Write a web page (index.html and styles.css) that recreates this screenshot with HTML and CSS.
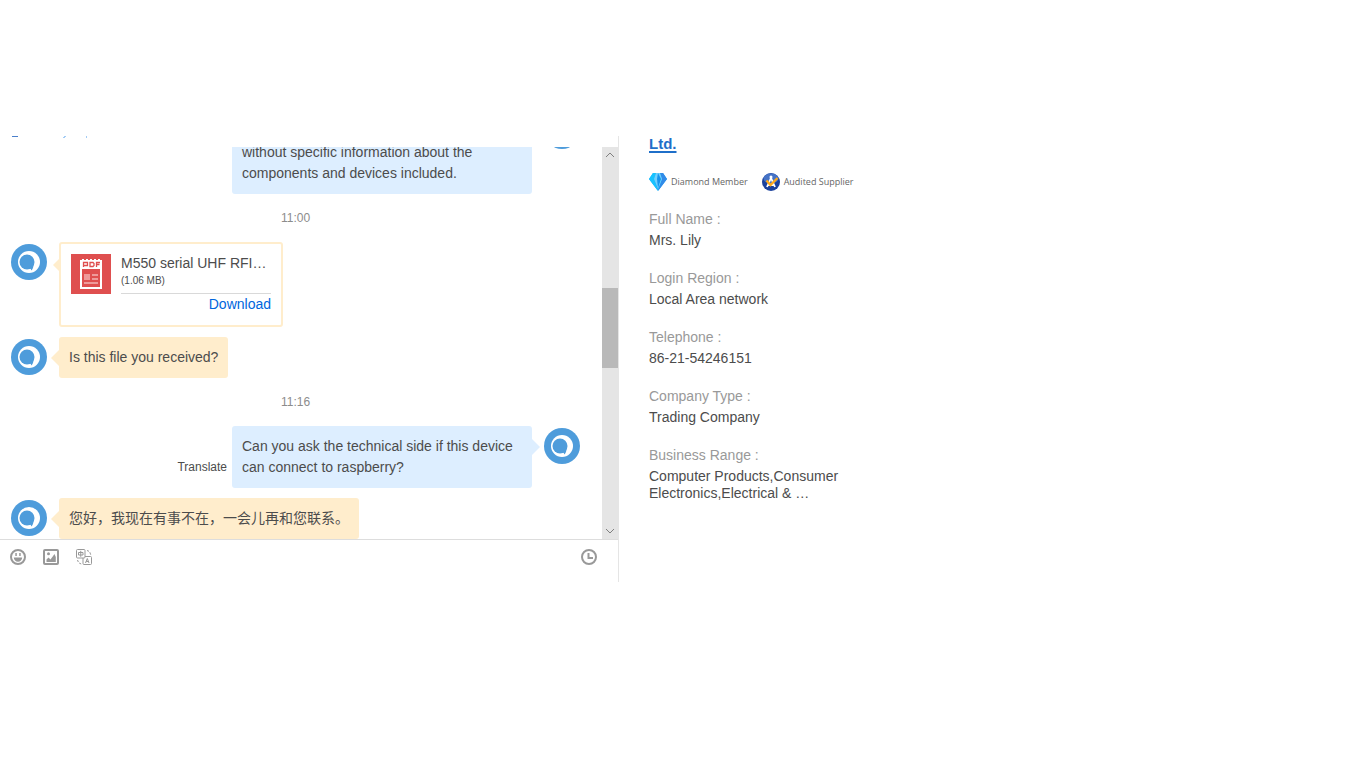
FILE: index.html
```html
<!DOCTYPE html>
<html lang="en">
<head>
<meta charset="utf-8">
<title>Chat</title>
<link rel="stylesheet" href="styles.css">
</head>
<body>
<svg class="defs" aria-hidden="true">
  <symbol id="avatar" viewBox="0 0 36 36">
    <circle cx="18" cy="18" r="18" fill="#4e9cdb"/>
    <circle cx="18" cy="18" r="11" fill="#fff"/>
    <circle cx="16" cy="18" r="7.500" fill="#4e9cdb"/>
    <path d="M16 24l6.500-3c0 2-.7 4.200-2 5.500-.3-1-.8-1.800-1.700-2.300z" fill="#4e9cdb"/>
  </symbol>
</svg>
<main class="app">
  <section class="chat">
    <header class="chat-header">
      <svg class="header-traces" width="100" height="3" viewBox="0 0 100 3" aria-hidden="true">
        <path d="M12 0h6v1h-6z" fill="#4a7fcb"/>
        <path d="M64 0h2v1h-1v1h-2v-1h1zM86 0h1v2h-1z" fill="#a3ccf5"/>
      </svg>
    </header>
    <div class="chat-body">
      <div class="messages">
        <div class="message sent">
          <svg class="avatar"><use href="#avatar"/></svg>
          <p class="bubble clipped">without specific information about the components and devices included.</p>
        </div>
        <time class="stamp">11:00</time>
        <div class="message">
          <svg class="avatar"><use href="#avatar"/></svg>
          <div class="bubble file">
            <svg class="file-icon" viewBox="0 0 40 40" aria-hidden="true">
              <path d="M0 0h40v40H0z" fill="#df4f4f"/>
              <path d="M9 6h2v-1h2v1h2v-1h2v1h2v-1h2v1h2v-1h2v1h2v-1h2v1h2v29H9z" fill="#fff"/>
              <path d="M11 15h18v18H11z" fill="#df4f4f"/>
              <path d="M12.500 13V8.500h4v3h-4M19 8.500v4h3l1-1v-2l-1-1zM25.500 13V8.500H29M25.500 10.500h3" fill="none" stroke="#df4f4f" stroke-width="1.300"/>
              <path d="M13 20h6v6h-6zM21 20h6v2h-6zM21 24h6v2h-6zM13 28h14v2H13z" fill="#ee9a9a"/>
            </svg>
            <div class="file-info">
              <span class="file-name">M550 serial UHF RFI…</span>
              <span class="file-size">(1.06 MB)</span>
              <a class="download" href="#download">Download</a>
            </div>
          </div>
        </div>
        <div class="message">
          <svg class="avatar"><use href="#avatar"/></svg>
          <p class="bubble">Is this file you received?</p>
        </div>
        <time class="stamp">11:16</time>
        <div class="message sent">
          <svg class="avatar"><use href="#avatar"/></svg>
          <p class="bubble">Can you ask the technical side if this device can connect to raspberry?</p>
          <button class="translate" type="button">Translate</button>
        </div>
        <div class="message">
          <svg class="avatar"><use href="#avatar"/></svg>
          <p class="bubble" lang="zh">您好，我现在有事不在，一会儿再和您联系。</p>
        </div>
      </div>
      <div class="scrollbar">
        <svg class="arrow" viewBox="0 0 16 16"><path d="M4 10l4-4 4 4"/></svg>
        <div class="track"><div class="thumb"></div></div>
        <svg class="arrow" viewBox="0 0 16 16"><path d="M4 6l4 4 4-4"/></svg>
      </div>
    </div>
    <footer class="toolbar">
      <button type="button" class="tool" aria-label="Emoji"><svg viewBox="0 0 16 16"><circle cx="8" cy="8" r="7" fill="none" stroke="#999" stroke-width="2"/><path d="M5.300 4h1.500v3H5.300zM9.200 4h1.500v3H9.200zM3.800 8.500h8.400a4.200 4.200 0 0 1-8.400 0z" fill="#999"/></svg></button>
      <button type="button" class="tool" aria-label="Picture"><svg viewBox="0 0 16 16"><rect x="1" y="1" width="14" height="14" rx="1" fill="none" stroke="#999" stroke-width="2"/><circle cx="5.500" cy="4.800" r="1.500" fill="#999"/><path d="M3.500 13V10.500L5.500 8.500l2 2L11.500 5l1.300 3v5z" fill="#999"/></svg></button>
      <button type="button" class="tool" aria-label="Translate text"><svg viewBox="0 0 16 16" fill="none" stroke="#999"><rect x=".5" y=".5" width="8.500" height="8.500" rx="1"/><path d="M2.500 3.500H7V6H2.500zM4.750 1.800v6M9 7.500h5.500q1 0 1 1v6q0 1-1 1H8q-1 0-1-1V9M9.500 14l1.800-4.500L13 14M10.200 12.500h2.300M11 1.500l2 .8M13.800 3.200l.9 2.500M1.500 11l.8 2M3.200 14l2 1"/></svg></button>
      <button type="button" class="tool history" aria-label="History"><svg viewBox="0 0 16 16" fill="none" stroke="#999" stroke-width="2"><circle cx="8" cy="8" r="7"/><path d="M7.500 4v5H12"/></svg></button>
    </footer>
  </section>
  <aside class="profile">
    <a class="company" href="#company">Ltd.</a>
    <div class="badges">
      <span class="badge"><svg viewBox="0 0 18 18" aria-hidden="true"><path d="M4 0h10l4 6-9 12L0 6z" fill="#1eaaf8"/><path d="M4 0h3L5 6l4 12L0 6z" fill="#16c3ff"/><path d="M11 0h3l4 6-9 12 4-12z" fill="#328be8"/><path d="M7 0h4l2 6-4 10L5 6z" fill="#70d0fc"/><path d="M9 0l3 6-3 9-1-9z" fill="#1594ee"/></svg>Diamond Member</span>
      <span class="badge"><svg viewBox="0 0 18 18" aria-hidden="true"><circle cx="9" cy="9" r="9" fill="#1c429d"/><ellipse cx="9" cy="5.500" rx="7.500" ry="5" fill="#4573c6"/><path d="M5 14L9 5l4 9M6.500 12h5" fill="none" stroke="#fff" stroke-width="1.800"/><circle cx="9" cy="4" r="1.500" fill="#fff"/><path d="M4.500 7.500l4 4.500L15.500 5" fill="none" stroke="#ffa91b" stroke-width="2.300"/></svg>Audited Supplier</span>
    </div>
    <dl class="details">
      <div><dt>Full Name :</dt><dd>Mrs. Lily</dd></div>
      <div><dt>Login Region :</dt><dd>Local Area network</dd></div>
      <div><dt>Telephone :</dt><dd>86-21-54246151</dd></div>
      <div><dt>Company Type :</dt><dd>Trading Company</dd></div>
      <div><dt>Business Range :</dt><dd>Computer Products,Consumer Electronics,Electrical &amp; …</dd></div>
    </dl>
  </aside>
</main>
</body>
</html>
```
FILE: styles.css
```css
* { box-sizing: border-box; }
body {
  margin: 0;
  background: #fff;
  color: #4c4c4c;
  font: 14px/21px "Liberation Sans", Arial, "Noto Sans CJK SC", sans-serif;
}
p, dl, dd { margin: 0; }
button { border: 0; padding: 0; background: none; font: inherit; color: inherit; }
svg { display: block; flex: none; }
.defs { position: absolute; width: 0; height: 0; }

.app {
  display: grid;
  grid-template-columns: 619px minmax(0, 1fr);
  align-items: start;
  padding-top: 136px;
}
.chat { border-right: 1px solid #e5e5e5; }
.chat-header { height: 11px; overflow: hidden; }
.chat-body {
  display: flex;
  height: 392px;
  overflow: hidden;
}
.messages {
  flex: 1;
  display: flex;
  flex-direction: column;
  gap: 10px;
  margin-top: -36px;
  padding: 0 22px 0 11px;
}
.message { display: flex; align-items: flex-start; gap: 12px; }
.sent { flex-direction: row-reverse; }
.avatar { width: 36px; height: 36px; margin-top: 2px; }
.bubble {
  position: relative;
  max-width: 300px;
  padding: 10px;
  border-radius: 3px;
  background: #ffedcc;
}
.bubble::before {
  content: "";
  position: absolute;
  top: 13px;
  left: -8px;
  border: 8px solid transparent;
  border-left: 0;
  border-right-color: #ffedcc;
}
.sent .bubble { background: #def; }
.sent .bubble::before {
  left: auto;
  right: -8px;
  border-left: 8px solid #def;
  border-right: 0;
}
.clipped {
  display: flex;
  align-items: flex-end;
  min-height: 83px;
}
.stamp {
  align-self: center;
  color: #8c8c8c;
  font-size: 12px;
  line-height: 28px;
}
.translate {
  align-self: flex-end;
  margin: 0 -7px 10px 0;
  font-size: 12px;
  line-height: 21px;
}
.file {
  display: flex;
  gap: 10px;
  width: 224px;
  border: 2px solid #ffedcc;
  background: #fff;
}
.file-icon { width: 40px; height: 40px; }
.file-info { display: flex; flex: 1; flex-direction: column; padding-bottom: 1px; }
.file-name { line-height: 18px; }
.file-size {
  padding-bottom: 4px;
  border-bottom: 1px solid #d9d9d9;
  font-size: 10px;
  line-height: 17px;
}
.download {
  align-self: flex-end;
  color: #0066dd;
  line-height: 20px;
  text-decoration: none;
}
.scrollbar {
  display: flex;
  flex-direction: column;
  width: 16px;
  background: #e5e5e5;
}
.arrow { width: 16px; height: 16px; fill: none; stroke: #808080; }
.track { flex: 1; padding-top: 125px; }
.thumb { height: 80px; background: #b9b9b9; }

.toolbar {
  display: flex;
  gap: 17px;
  height: 43px;
  padding: 9px 21px 0 10px;
  border-top: 1px solid #ddd;
}
.tool, .tool svg { width: 16px; height: 16px; }
.history { margin-left: auto; }

.profile { padding: 0 30px; }
.company {
  display: block;
  width: max-content;
  color: #1f6fc9;
  font-size: 15px;
  font-weight: bold;
  line-height: 16px;
  text-decoration: underline;
  text-decoration-thickness: 2px;
  text-underline-offset: 2px;
}
.badges { display: flex; gap: 14px; margin: 21px 0 17px; }
.badge {
  display: flex;
  align-items: center;
  gap: 4px;
  color: #666;
  font: 9px/18px "Open Sans", sans-serif;
}
.badge svg { width: 18px; height: 18px; }
.details {
  display: grid;
  gap: 18px;
  max-width: 210px;
}
dt { color: #999; line-height: 22px; }
dd { padding-top: 2px; line-height: 17px; }
```
